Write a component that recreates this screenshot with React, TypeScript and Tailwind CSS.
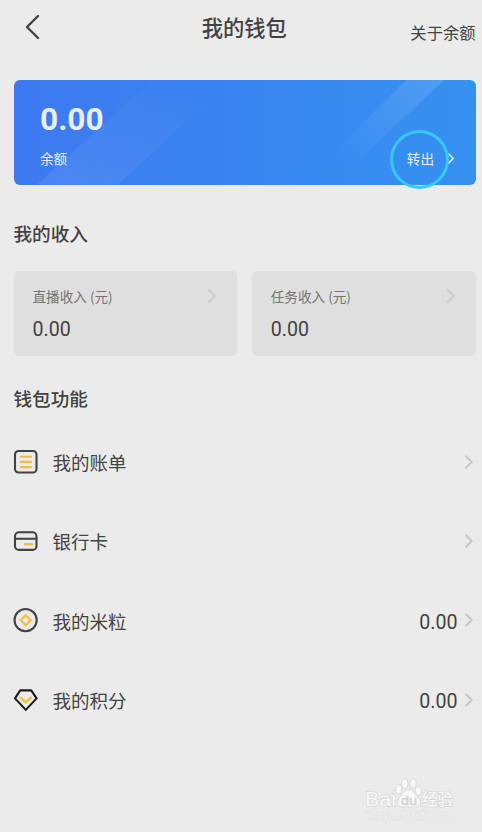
import React from 'react';

interface ChevronProps {
  className?: string;
}

interface IncomeCardProps {
  title: string;
  amount: string;
}

interface WalletItem {
  id: string;
  label: string;
  icon: React.ReactNode;
  value?: string;
}

const Chevron: React.FC<ChevronProps> = ({ className }) => (
  <svg className={className} viewBox="0 0 10 16" fill="none" stroke="currentColor" strokeWidth={2}>
    <path strokeLinecap="round" strokeLinejoin="round" d="M2 2.2L7.8 8L2 13.8" />
  </svg>
);

const BillIcon = () => (
  <svg className="h-[26px] w-[26px]" viewBox="0 0 26 26" fill="none" strokeLinecap="round">
    <rect x="2" y="2" width="21.5" height="21.5" rx="3.6" stroke="#424242" strokeWidth={2.1} />
    <path d="M7.7 7.8H18M7.7 12.9H18M7.7 18.1H18" stroke="#f0bd45" strokeWidth={2.1} />
  </svg>
);

const BankCardIcon = () => (
  <svg className="h-[26px] w-[26px]" viewBox="0 0 26 26" fill="none" strokeLinecap="round">
    <rect x="2" y="4.3" width="21.5" height="17.6" rx="4" stroke="#424242" strokeWidth={2.1} />
    <path d="M2 10.8H23.5" stroke="#424242" strokeWidth={2.1} />
    <path d="M12.2 16.3H19" stroke="#f0bd45" strokeWidth={2.4} />
  </svg>
);

const CoinIcon = () => (
  <svg className="h-[26px] w-[26px]" viewBox="0 0 26 26" fill="none">
    <circle cx="12.6" cy="13.1" r="11.1" stroke="#424242" strokeWidth={2.1} />
    <path d="M12.7 8.2L17.7 13.2L12.7 18.2L7.7 13.2Z" stroke="#f5bd3b" strokeWidth={2.1} />
  </svg>
);

const PointsIcon = () => (
  <svg className="h-[26px] w-[26px]" viewBox="0 0 26 26" fill="none" strokeLinecap="round" strokeLinejoin="round">
    <path d="M7.2 3.4H18.2L23.6 11.4L12.8 22.9L2 11.4Z" stroke="#1c1c1c" strokeWidth={2.1} />
    <path d="M7.8 10.8L12.8 15.4L17.8 10.8" stroke="#f5bd3b" strokeWidth={2.3} />
  </svg>
);

const walletItems: WalletItem[] = [
  { id: 'bill', label: '我的账单', icon: <BillIcon /> },
  { id: 'card', label: '银行卡', icon: <BankCardIcon /> },
  { id: 'coin', label: '我的米粒', icon: <CoinIcon />, value: '0.00' },
  { id: 'points', label: '我的积分', icon: <PointsIcon />, value: '0.00' },
];

const IncomeCard: React.FC<IncomeCardProps> = ({ title, amount }) => (
  <div className="h-[85px] flex-1 rounded-[5px] bg-[#dfdfdf] pt-[15px] pr-5 pl-[19px]">
    <div className="flex items-center justify-between">
      <span className="font-['Noto_Sans_CJK_SC',sans-serif] text-[13.6px] leading-5 text-[#747474]">{title}</span>
      <Chevron className="h-4 w-2.5 text-[#cbcbcb]" />
    </div>
    <p className="mt-[12px] text-[19.6px] leading-6 text-[#424242]">{amount}</p>
  </div>
);

const BalanceCard = () => (
  <div className="relative mr-[6.5px] ml-[13.5px] h-[104.5px] rounded-md bg-linear-to-r from-[#3d79f0] via-[#3985f1] to-[#3591f0] pt-[22px] pr-[20.5px] pl-[26.5px] text-[#ebedf0]">
    {/* diagonal light bands */}
    <svg className="absolute inset-0 h-full w-full rounded-md" viewBox="0 0 462 104.5" preserveAspectRatio="none">
      <defs>
        <linearGradient id="bandLeft" x1="0" y1="1" x2="1" y2="0">
          <stop offset="0.1" stopColor="#fff" stopOpacity="0.08" />
          <stop offset="0.85" stopColor="#fff" stopOpacity="0" />
        </linearGradient>
        <linearGradient id="bandRight" x1="0" y1="1" x2="1" y2="0">
          <stop offset="0.1" stopColor="#fff" stopOpacity="0" />
          <stop offset="1" stopColor="#fff" stopOpacity="0.13" />
        </linearGradient>
      </defs>
      <path d="M23 104.5L138 0H218L104 104.5Z" fill="url(#bandLeft)" />
      <path d="M305 87L392 0H430L338 87Z" fill="url(#bandRight)" />
    </svg>
    <p className="relative text-[31.6px] leading-9 font-bold">0.00</p>
    <div className="relative mt-[10.5px] flex items-center justify-between text-[13.6px] leading-5">
      <span>余额</span>
      <span className="flex items-center gap-[13px]">
        转出
        <Chevron className="h-[13px] w-2" />
      </span>
    </div>
    <div className="absolute top-[50px] right-[27px] h-[59px] w-[59px] rounded-full border-3 border-[#36c8ff]" />
  </div>
);

const Watermark = () => (
  <svg className="absolute top-[774px] left-[360px] h-[50px] w-[100px] overflow-visible" viewBox="0 0 100 50">
    <g fill="#f7f7f7" stroke="#d6d6d6" strokeWidth={0.9}>
      <ellipse cx="38.7" cy="15.3" rx="3.1" ry="4.6" />
      <ellipse cx="44.8" cy="9.6" rx="3.2" ry="4.8" />
      <ellipse cx="53" cy="9.6" rx="3.2" ry="4.8" />
      <ellipse cx="58.3" cy="17" rx="3.1" ry="4.4" />
      <path d="M48.7 15.5C44 15.5 43 20 40 22.8C36 26.5 36.5 33 42 33H56C61.5 33 62 26.5 58 23C54.5 20 53.5 15.5 48.7 15.5Z" />
    </g>
    <g fontFamily="'Liberation Sans', 'Noto Sans CJK SC', sans-serif" paintOrder="stroke" stroke="#d9d9d9" strokeWidth={1.5}>
      <text x="5" y="32" fontSize="20" fill="#f7f7f7" textLength="31" lengthAdjust="spacingAndGlyphs">Bai</text>
      <text x="41" y="31" fontSize="13.5" fill="#d3d3d3" stroke="#d3d3d3" strokeWidth={0.6} textLength="16" lengthAdjust="spacingAndGlyphs">du</text>
      <text x="62" y="31" fontSize="15.5" fontWeight="500" fill="#f7f7f7" textLength="31">经验</text>
      <text x="6" y="44.5" fontSize="11" fill="#f4f4f4" strokeWidth={1} stroke="#e0e0e0" textLength="88">jingyan.baidu.com</text>
    </g>
  </svg>
);

const App: React.FC = () => {
  return (
    <div
      lang="zh-CN"
      className="relative h-[832px] w-[482px] overflow-hidden bg-[#ebebeb] font-[Roboto,'Noto_Sans_CJK_SC',sans-serif] text-[#424242]">
      <header className="grid h-20 grid-cols-[1fr_auto_1fr] items-start pr-[6.5px] pl-[25px]">
        <button className="mt-[14px] w-4" aria-label="返回">
          <svg className="h-[26px] w-4" viewBox="0 0 16 26" fill="none" stroke="currentColor" strokeWidth={2.4}>
            <path strokeLinecap="round" strokeLinejoin="round" d="M13 2L2 13L13 24" />
          </svg>
        </button>
        <h1 className="mt-[15px] mr-[12px] text-[21.3px] leading-7 font-medium">我的钱包</h1>
        <span className="mt-[22px] justify-self-end text-[16.3px] leading-6">关于余额</span>
      </header>

      <BalanceCard />

      <section className="pr-[6.5px] pl-[13.5px]">
        <h2 className="mt-[36.5px] text-[18.6px] leading-7 font-medium">我的收入</h2>
        <div className="mt-[22px] flex gap-[14.5px]">
          <IncomeCard title="直播收入 (元)" amount="0.00" />
          <IncomeCard title="任务收入 (元)" amount="0.00" />
        </div>
      </section>

      <section className="pr-2 pl-[13px]">
        <h2 className="mt-[29.5px] pl-[0.5px] text-[18.6px] leading-7 font-medium">钱包功能</h2>
        <ul className="mt-[8.5px]">
          {walletItems.map((item) => (
            <li key={item.id} className="flex h-[79.3px] items-center">
              {item.icon}
              <span className="mt-[5px] ml-[13.5px] text-[18.5px] leading-7">{item.label}</span>
              <span className="mt-[5px] ml-auto text-[19.6px] leading-6">{item.value}</span>
              <Chevron className="ml-[6.5px] h-4 w-2.5 text-[#c8c8c8]" />
            </li>
          ))}
        </ul>
      </section>

      <Watermark />
    </div>
  );
};

export default App;
